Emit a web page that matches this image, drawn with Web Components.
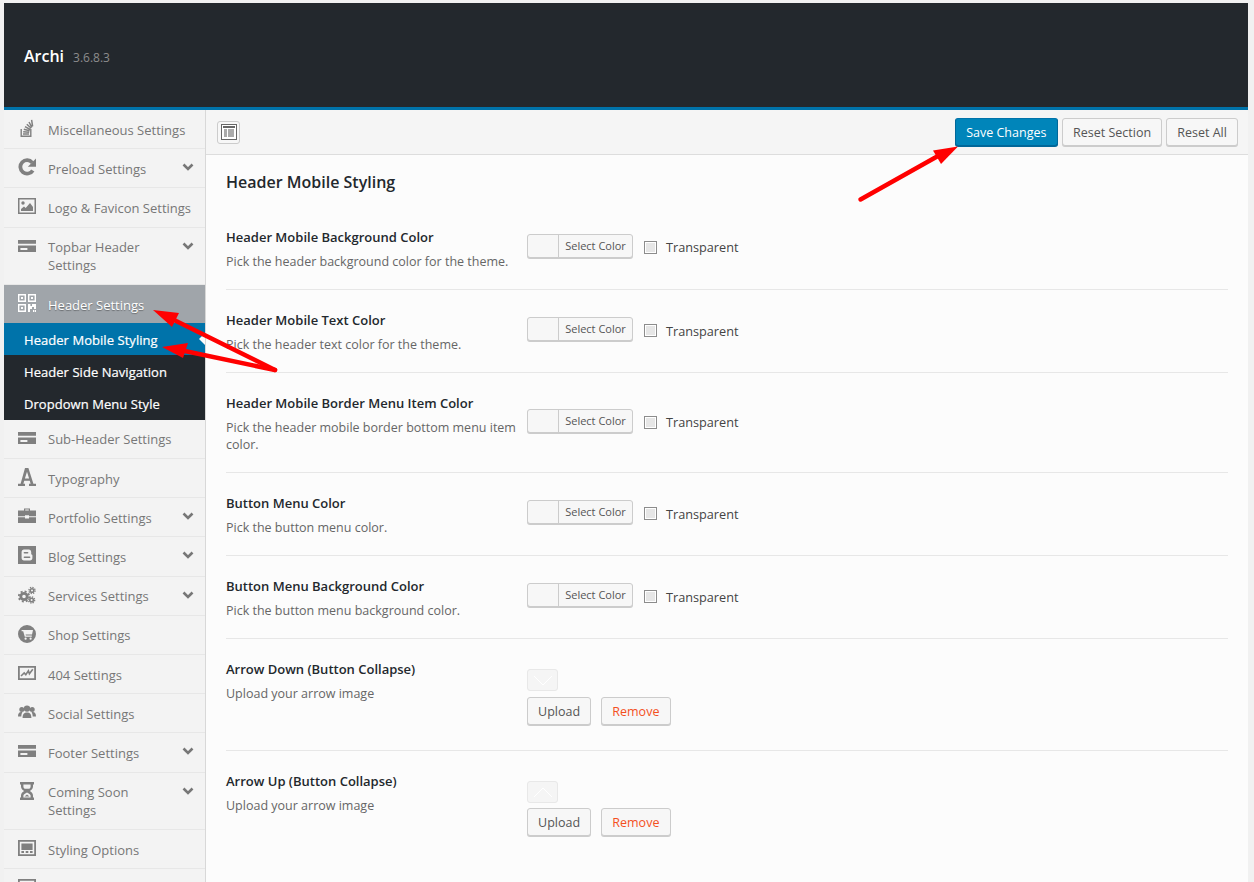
<!DOCTYPE html>
<html lang="en">
<head>
<meta charset="utf-8">
<title>Archi options</title>
<style>
  html, body { height: 100%; overflow: hidden; }
  body { margin: 0; background: #f1f1f1; font-family: "Open Sans", "Liberation Sans", sans-serif; font-size: 13px; }
</style>
</head>
<body>
<options-page>
  <panel-header slot="header" name="Archi" version="3.6.8.3"></panel-header>
  <side-nav slot="nav">
    <nav-item icon="stack">Miscellaneous Settings</nav-item>
    <nav-item icon="refresh" more>Preload Settings</nav-item>
    <nav-item icon="picture">Logo &amp; Favicon Settings</nav-item>
    <nav-item icon="card" more>Topbar Header Settings</nav-item>
    <nav-item icon="qrcode" active>Header Settings</nav-item>
    <sub-item current>Header Mobile Styling</sub-item>
    <sub-item>Header Side Navigation</sub-item>
    <sub-item>Dropdown Menu Style</sub-item>
    <nav-item icon="card">Sub-Header Settings</nav-item>
    <nav-item icon="font">Typography</nav-item>
    <nav-item icon="briefcase" more>Portfolio Settings</nav-item>
    <nav-item icon="blogger" more>Blog Settings</nav-item>
    <nav-item icon="cogs" more>Services Settings</nav-item>
    <nav-item icon="cart">Shop Settings</nav-item>
    <nav-item icon="chart">404 Settings</nav-item>
    <nav-item icon="group">Social Settings</nav-item>
    <nav-item icon="card" more>Footer Settings</nav-item>
    <nav-item icon="hourglass" more>Coming Soon Settings</nav-item>
    <nav-item icon="window">Styling Options</nav-item>
    <nav-item icon="window"></nav-item>
  </side-nav>
  <panel-toolbar slot="toolbar"></panel-toolbar>
  <settings-section heading="Header Mobile Styling">
    <setting-row first label="Header Mobile Background Color" desc="Pick the header background color for the theme."><color-field></color-field></setting-row>
    <setting-row label="Header Mobile Text Color" desc="Pick the header text color for the theme."><color-field></color-field></setting-row>
    <setting-row label="Header Mobile Border Menu Item Color" desc="Pick the header mobile border bottom menu item color."><color-field></color-field></setting-row>
    <setting-row label="Button Menu Color" desc="Pick the button menu color."><color-field></color-field></setting-row>
    <setting-row label="Button Menu Background Color" desc="Pick the button menu background color."><color-field></color-field></setting-row>
    <setting-row label="Arrow Down (Button Collapse)" desc="Upload your arrow image"><upload-field dir="down"></upload-field></setting-row>
    <setting-row label="Arrow Up (Button Collapse)" desc="Upload your arrow image" last><upload-field dir="up"></upload-field></setting-row>
  </settings-section>
</options-page>
<red-arrows></red-arrows>

<script>
const ICONS = {
    stack: `<path d="M2.500 10v8h11v-8h-1.400v6.600H3.900V10z"/><g fill="none" stroke="currentColor" stroke-width="1.500"><path d="M5 15h6M5.200 12.700l6 .6M5.800 10.200l5.800 1.600M7 7.700l5.200 2.800M8.800 5.200l4.400 4M11 3l2.900 5.400M13.600 .8l1 6.600"/></g>`,
    refresh: `<path d="M14.200 4.600A6.700 6.700 0 1 0 14.800 12.400" fill="none" stroke="currentColor" stroke-width="3.800"/><path d="M18 .6v8.200H9.800z"/>`,
    picture: `<path fill-rule="evenodd" d="M0 1h18v16H0zM1.500 2.500v13h15v-13z"/><circle cx="5" cy="6" r="1.700"/><path d="M3 14v-2l3-2.400 1.700 1.400L12 6l3 4v4z"/>`,
    card: `<path fill-rule="evenodd" d="M0 3h18v12H0zM0 6.800v1.600h18V6.800zM2.400 11v2h7v-2z"/>`,
    qrcode: `<path fill-rule="evenodd" d="M0 0h8v8H0zM1.400 1.400v5.200h5.200V1.400zM10 0h8v8h-8zM11.400 1.400v5.200h5.200V1.400zM0 10h8v8H0zM1.400 11.400v5.200h5.200v-5.200z"/><path d="M3 3h2v2H3zM13 3h2v2h-2zM3 13h2v2H3zM10 10h2.400v2H14v-2h4v5h-2v-2h-2v2h-2v3h-2zM15 16h1.400v2H15zM17 16h1v2h-1z"/>`,
    font: `<path fill-rule="evenodd" d="M7 0h3.400L15.400 15.800H18V18h-7v-2.200h1.600l-.8-3H6.200l-.8 3H7V18H0v-2.200h2.600zM6.900 10.400h4.200L9 3.800z"/>`,
    briefcase: `<path fill-rule="evenodd" d="M6 3.600V1.400h6v2.200h6v5.600h-7v-1H7v1H0V3.600zM7.200 2.600v1h3.600v-1z"/><path d="M0 10.200h7v1.400h4v-1.400h7V16H0z"/>`,
    blogger: `<path fill-rule="evenodd" d="M0 0h18v18H0zM6 3.600C4.600 3.600 3.600 4.600 3.600 6v6c0 1.400 1 2.400 2.400 2.400h6c1.400 0 2.400-1 2.400-2.400V9.600c0-.8-.6-1.200-1.200-1.400V6c0-1.400-1-2.400-2.400-2.400zM6.400 6h3.200c.5 0 .8.3.8.8s-.3.8-.8.8H6.400c-.5 0-.8-.3-.8-.8s.3-.8.8-.8zM6.400 10.400h5.200c.5 0 .8.3.8.8s-.3.8-.8.8H6.400c-.5 0-.8-.3-.8-.8s.3-.8.8-.8z"/>`,
    cogs: `<g fill="none" stroke="currentColor"><circle cx="6" cy="10.500" r="3.200" stroke-width="2.800"/><circle cx="6" cy="10.500" r="5.200" stroke-width="1.800" stroke-dasharray="2 2.080"/><circle cx="14" cy="4.500" r="1.800" stroke-width="1.600"/><circle cx="14" cy="4.500" r="3.100" stroke-width="1.300" stroke-dasharray="1.300 1.130"/><circle cx="13.600" cy="14" r="1.800" stroke-width="1.600"/><circle cx="13.600" cy="14" r="3.100" stroke-width="1.300" stroke-dasharray="1.300 1.130"/></g>`,
    cart: `<path fill-rule="evenodd" d="M9 0a9 9 0 1 1 0 18A9 9 0 0 1 9 0zM3.600 5v1.200h1.600l1.600 5.600h7v-1.200H7.900l-.3-1h6.400l1-4.600zM7.600 12.600a1.100 1.100 0 1 0 0 2.200 1.100 1.100 0 0 0 0-2.200zM12.600 12.600a1.100 1.100 0 1 0 0 2.200 1.100 1.100 0 0 0 0-2.200z"/>`,
    chart: `<path fill-rule="evenodd" d="M0 2h18v14H0zM1.800 3.800v10.400h14.400V3.800z"/><path d="M3 12l3.200-3 1.600 1.800 2.600-4 1 3 3.400-4.600" fill="none" stroke="currentColor" stroke-width="1.600"/>`,
    group: `<circle cx="9" cy="5.600" r="3.200"/><circle cx="3.800" cy="6.600" r="2.500"/><circle cx="14.200" cy="6.600" r="2.500"/><path d="M4.600 15c0-4 1.600-5.600 4.400-5.600s4.400 1.600 4.400 5.600zM0 13.600c0-3 1-4.600 3.200-4.600.5 0 1 .1 1.300.3-.8 1-1.100 2.500-1.200 4.300zM18 13.600c0-3-1-4.600-3.200-4.600-.5 0-1 .1-1.300.3.8 1 1.100 2.500 1.200 4.300z"/>`,
    hourglass: `<path fill-rule="evenodd" d="M2 0h14v2.400h-1v2c0 2.200-1.600 3.600-3.200 4.600 1.600 1 3.200 2.400 3.200 4.600v2h1V18H2v-2.400h1v-2C3 11.400 4.600 10 6.200 9 4.600 8 3 6.600 3 4.400v-2H2zM5.400 2.400v2c0 1.100.7 1.800 1.500 2.400h4.200c.8-.6 1.500-1.300 1.500-2.400v-2zM9 10.400c-1.700 1-3.600 1.900-3.600 3.200v2h7.200v-2c0-1.300-1.900-2.200-3.600-3.200z"/><path d="M6.500 14.600L9 12.400l2.500 2.200z"/>`,
    window: `<path fill-rule="evenodd" d="M0 1h18v16H0zM1.800 2.800v12.400h14.400V2.800z"/><path d="M3.400 4.400h11.200v6.600H3.400zM3.400 12h2.600v2H3.400zM7.700 12h2.600v2H7.700zM12 12h2.600v2H12z"/>`,
};

function iconSvg(name) {
    return `<svg viewBox="0 0 18 18" width="18" height="18" fill="currentColor" aria-hidden="true">${ICONS[name] || ""}</svg>`;
}

class OptionsPage extends HTMLElement {
    constructor() {
        super();
        this.attachShadow({ mode: "open" });
        this.shadowRoot.innerHTML = `
      <style>
        :host { display: block; margin: 3px 6px 0 4px; }
        #body { display: flex; align-items: stretch; }
        #nav { flex: 0 0 201px; border-right: 1px solid #d8d8d8; background: #f3f3f3; }
        #main { flex: 1; min-width: 0; background: #fcfcfc; }
      </style>
      <slot name="header"></slot>
      <div id="body">
        <div id="nav"><slot name="nav"></slot></div>
        <div id="main"><slot name="toolbar"></slot><slot></slot></div>
      </div>`;
    }
}

class PanelHeader extends HTMLElement {
    constructor() {
        super();
        this.attachShadow({ mode: "open" });
    }
    connectedCallback() {
        this.shadowRoot.innerHTML = `
      <style>
        :host {
          display: block;
          height: 104px; padding: 0 20px;
          background: #23282d; border-bottom: 3px solid #0073aa;
        }
        #wrap { display: flex; align-items: baseline; gap: 9px; padding-top: 42px; }
        b { font-size: 16px; line-height: 22px; font-weight: 600; color: #fff; }
        span { font-size: 12px; color: #8c8c8c; }
      </style>
      <div id="wrap"><b>${this.getAttribute("name")}</b><span>${this.getAttribute("version")}</span></div>`;
    }
}

class SideNav extends HTMLElement {
    constructor() {
        super();
        this.attachShadow({ mode: "open" });
        this.shadowRoot.innerHTML = `
      <style>:host { display: block; }</style>
      <slot></slot>`;
    }
}

class NavItem extends HTMLElement {
    constructor() {
        super();
        this.attachShadow({ mode: "open" });
    }
    connectedCallback() {
        const more = this.hasAttribute("more");
        this.shadowRoot.innerHTML = `
      <style>
        :host {
          display: flex; align-items: flex-start; gap: 12px;
          padding: 10px 11px 10px 14px;
          border-bottom: 1px solid #e7e7e7;
          color: #777; line-height: 18.2px;
        }
        :host([active]) {
          background: #a0a5aa; color: #fff; border-bottom: 0;
          text-shadow: 0 1px 1px rgba(0,0,0,.35);
        }
        .ic { flex: 0 0 18px; height: 18px; color: #808080; margin-top: -1px; }
        :host([active]) .ic { color: #fff; }
        .ic svg { display: block; }
        #label { flex: 1; min-width: 0; position: relative; top: .6px; }
        #more { flex: 0 0 12px; height: 18px; color: #777; margin-top: -1px; }
      </style>
      <span class="ic">${iconSvg(this.getAttribute("icon"))}</span>
      <span id="label"><slot></slot></span>
      ${more ? `<svg id="more" viewBox="0 0 12 18"><path d="M1.500 6.500L6 11l4.500-4.500" fill="none" stroke="currentColor" stroke-width="2.600"/></svg>` : ""}`;
    }
}

class SubItem extends HTMLElement {
    constructor() {
        super();
        this.attachShadow({ mode: "open" });
        this.shadowRoot.innerHTML = `
      <style>
        :host {
          display: block; position: relative;
          padding: 7.6px 10px 6.400px 20px;
          background: #23282d; color: #fff;
          font-weight: 500; line-height: 18.2px;
          letter-spacing: .05px; -webkit-text-stroke: .2px #fff;
        }
        :host([current]) { background: #0073aa; }
        :host([current])::after {
          content: ""; position: absolute; right: 0; top: 10px;
          border: 6px solid transparent; border-right-color: #fcfcfc; border-left: 0;
        }
      </style>
      <slot></slot>`;
    }
}

class WpButton extends HTMLElement {
    constructor() {
        super();
        this.attachShadow({ mode: "open" });
        this.shadowRoot.innerHTML = `
      <style>
        :host {
          display: inline-flex; align-items: center; justify-content: center;
          box-sizing: border-box; height: 28px; padding: 0 10.100px;
          border: 1px solid #ccc; border-radius: 3px;
          background: #f7f7f7; color: #555; box-shadow: 0 1px 0 #ccc;
          font-size: 12.500px; white-space: nowrap;
        }
        :host([primary]) { background: #0085ba; border-color: #0073aa #006799 #006799; color: #fff; box-shadow: 0 1px 0 #006799; padding: 0 10.500px; }
        :host([danger]) { color: #f4501e; }
      </style>
      <slot></slot>`;
    }
}

class PanelToolbar extends HTMLElement {
    constructor() {
        super();
        this.attachShadow({ mode: "open" });
        this.shadowRoot.innerHTML = `
      <style>
        :host {
          display: flex; align-items: center; gap: 4px;
          height: 44px; padding: 0 10px 0 11px;
          background: #f5f5f5; border-bottom: 1px solid #ddd;
        }
        #toggle {
          box-sizing: border-box; width: 23px; height: 23px; margin-right: auto;
          display: flex; align-items: center; justify-content: center;
          background: #f7f7f7; border: 1px solid #ccc; border-radius: 3px; color: #666;
        }
      </style>
      <span id="toggle"><svg viewBox="0 0 16 16" width="16" height="16"><rect x=".5" y=".5" width="15" height="15" fill="#fff" stroke="currentColor"/><path fill="currentColor" d="M2 2h12v2H2z"/><path fill="#aaa" d="M3 5h3v8H3zM7 5h6v8H7z"/></svg></span>
      <wp-button primary>Save Changes</wp-button>
      <wp-button>Reset Section</wp-button>
      <wp-button>Reset All</wp-button>`;
    }
}

class SettingsSection extends HTMLElement {
    constructor() {
        super();
        this.attachShadow({ mode: "open" });
    }
    connectedCallback() {
        this.shadowRoot.innerHTML = `
      <style>
        :host { display: block; padding: 0 20px; }
        h2 {
          margin: 0; padding: 17px 0 13px; height: 21px;
          font-size: 16px; line-height: 21px; font-weight: 600; color: #23282d;
        }
      </style>
      <h2>${this.getAttribute("heading")}</h2>
      <slot></slot>`;
    }
}

class SettingRow extends HTMLElement {
    constructor() {
        super();
        this.attachShadow({ mode: "open" });
    }
    connectedCallback() {
        this.shadowRoot.innerHTML = `
      <style>
        :host {
          display: flex; box-sizing: border-box;
          border-bottom: 1px solid #e7e7e7;
        }
        :host([last]) { border-bottom: 0; }
        #th { flex: 0 0 291px; padding: 21px 0 19px; box-sizing: border-box; }
        :host([first]) #th { padding: 22px 0 19px; }
        #td { flex: 1; padding-left: 10px; align-self: center; }
        b { display: block; font-weight: 600; font-size: 13px; line-height: 18px; color: #23282d; }
        p { margin: 7px 0 0; font-size: 12.500px; line-height: 17px; color: #666; }
      </style>
      <div id="th"><b>${this.getAttribute("label")}</b><p>${this.getAttribute("desc")}</p></div>
      <div id="td"><slot></slot></div>`;
    }
}

class ColorField extends HTMLElement {
    constructor() {
        super();
        this.attachShadow({ mode: "open" });
        this.shadowRoot.innerHTML = `
      <style>
        :host { display: flex; align-items: center; margin-bottom: 4px; color: #555; }
        #picker {
          box-sizing: border-box; display: flex; width: 106px; height: 24px;
          border: 1px solid #ccc; border-radius: 3px; background: #f7f7f7; box-shadow: 0 1px 0 #ccc;
        }
        #swatch { width: 30px; border-right: 1px solid #ccc; }
        #text { flex: 1; text-align: center; font-size: 11px; line-height: 22px; }
        #check {
          box-sizing: border-box; width: 13px; height: 13px; margin: 3px 9px 0 11px;
          border: 1px solid #8c8c8c; background: #e6e6e6; box-shadow: inset 0 0 0 1px #fff;
        }
        #lab { font-size: 12.700px; margin-top: 3px; color: #444; }
      </style>
      <div id="picker"><div id="swatch"></div><div id="text">Select Color</div></div>
      <div id="check"></div><div id="lab">Transparent</div>`;
    }
}

class UploadField extends HTMLElement {
    constructor() {
        super();
        this.attachShadow({ mode: "open" });
    }
    connectedCallback() {
        const up = this.getAttribute("dir") === "up";
        const d = up ? "M6 15l9-9 9 9" : "M6 6l9 9 9-9";
        this.shadowRoot.innerHTML = `
      <style>
        :host { display: block; padding: 30px 0 25px; }
        #thumb {
          box-sizing: border-box; display: block; width: 31px; height: 22px; margin-bottom: ${up ? 5 : 6}px;
          border: 1px solid #e8e8e8; border-radius: 3px; background: #f5f5f5;
        }
        #btns { display: flex; gap: 10px; }
      </style>
      <svg id="thumb" viewBox="0 0 29 20"><path d="${d}" fill="none" stroke="#fff" stroke-width="1"/></svg>
      <div id="btns"><wp-button>Upload</wp-button><wp-button danger>Remove</wp-button></div>`;
    }
}

class RedArrows extends HTMLElement {
    constructor() {
        super();
        this.attachShadow({ mode: "open" });
        this.shadowRoot.innerHTML = `
      <style>
        :host { display: block; position: absolute; left: 0; top: 0; width: 1254px; height: 882px; pointer-events: none; }
        svg { display: block; }
      </style>
      <svg width="1254" height="882" viewBox="0 0 1254 882">
        <g fill="#f00" stroke="#f00" stroke-width="4.500" stroke-linecap="round">
          <path d="M860.500 199.500L938 156"/>
          <path d="M275 370L170 318"/>
          <path d="M275 370L180 350"/>
        </g>
        <g fill="#f00">
          <path d="M958 146.500L933 150.500L941 164z"/>
          <path d="M153 310L179 313L172 327z"/>
          <path d="M162 347L188 343L183 358z"/>
        </g>
      </svg>`;
    }
}

customElements.define("options-page", OptionsPage);
customElements.define("panel-header", PanelHeader);
customElements.define("side-nav", SideNav);
customElements.define("nav-item", NavItem);
customElements.define("sub-item", SubItem);
customElements.define("wp-button", WpButton);
customElements.define("panel-toolbar", PanelToolbar);
customElements.define("settings-section", SettingsSection);
customElements.define("setting-row", SettingRow);
customElements.define("color-field", ColorField);
customElements.define("upload-field", UploadField);
customElements.define("red-arrows", RedArrows);
</script>
</body>
</html>
